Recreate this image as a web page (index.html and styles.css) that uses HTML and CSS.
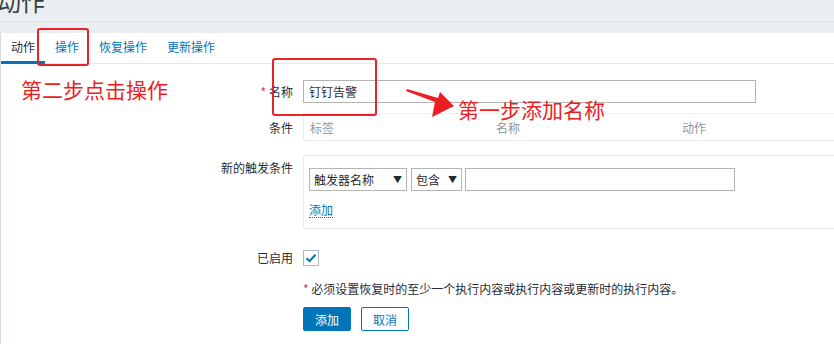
FILE: index.html
```html
<!doctype html>
<html>
<head>
    <meta charset="utf-8">
    <title>动作</title>
    <link rel="stylesheet" href="styles.css">
</head>
<body>

    <div class="header">
        <h1>动作</h1>
    </div>

    <div class="panel">
        <ul class="tabs">
            <li class="active">动作</li>
            <li><a href="#">操作</a></li>
            <li><a href="#">恢复操作</a></li>
            <li><a href="#">更新操作</a></li>
        </ul>

        <div class="form">
            <div class="row row-name">
                <label class="required">名称</label>
                <div class="field"><input type="text" class="text-wide" value="钉钉告警"></div>
            </div>
            <div class="row row-cond">
                <label>条件</label>
                <div class="field">
                    <div class="box cond-box">
                        <span class="col">标签</span>
                        <span class="col">名称</span>
                        <span class="col">动作</span>
                    </div>
                </div>
            </div>
            <div class="row row-trigger">
                <label>新的触发条件</label>
                <div class="field">
                    <div class="box trigger-box">
                        <div class="controls">
                            <div class="select select-type">触发器名称<span class="caret">▼</span></div>
                            <div class="select select-op">包含<span class="caret">▼</span></div>
                            <input type="text" class="text-value">
                        </div>
                        <a href="#" class="link-add">添加</a>
                    </div>
                </div>
            </div>
            <div class="row row-enabled">
                <label>已启用</label>
                <div class="field">
                    <span class="checkbox">
                        <svg width="12" height="10" viewBox="0 0 12 10"><path d="M1.5 5.2 L4.6 8 L10.5 1.8" fill="none" stroke="#0275b8" stroke-width="2"/></svg>
                    </span>
                </div>
            </div>
            <div class="row row-hint">
                <label></label>
                <div class="field hint"><span class="star">*</span> 必须设置恢复时的至少一个执行内容或执行内容或更新时的执行内容。</div>
            </div>
            <div class="row row-buttons">
                <label></label>
                <div class="field buttons">
                    <button class="btn-primary">添加</button>
                    <button class="btn-alt">取消</button>
                </div>
            </div>
        </div>

        <!-- annotations drawn over the screenshot -->
        <div class="mark mark-tab"></div>
        <div class="mark mark-name"></div>
        <div class="note note-two">第二步点击操作</div>
        <div class="note note-one">第一步添加名称</div>
        <svg class="arrow" width="60" height="40" viewBox="0 0 60 40">
            <path d="M2 5 L3 3 L34 12 L36 6 L50 20 L28 31 L31 16 Z" fill="#ee1d24"/>
        </svg>
    </div>

</body>
</html>
```

FILE: styles.css
```css
body {
    margin: 0;
    background-color: #ebeef0;
    font-family: "Noto Sans CJK SC", "Noto Sans", sans-serif;
    font-size: 12px;
    color: #1f2c33;
    overflow: hidden;
}
.header {
    height: 21px;
    border-bottom: 1px solid #dde2e5;
    background-color: #eceff1;
    overflow: hidden;
    margin-bottom: 11px;
}
.header h1 {
    margin: -14px 0 0 -3px;
    font-size: 24px;
    font-weight: normal;
    line-height: 30px;
    color: #383f44;
}
.panel {
    position: relative;
    background-color: #fff;
    border-left: 1px solid #d6dbde;
    height: 320px;
}
.tabs {
    display: flex;
    margin: 0;
    padding: 0;
    list-style: none;
    height: 30px;
    border-bottom: 1px solid #e6eaec;
}
.tabs li {
    padding: 0 10px;
    line-height: 28px;
    border-bottom: 3px solid transparent;
    margin-bottom: -1px;
}
.tabs li.active {
    border-bottom-color: #0275b8;
}
.tabs a {
    color: #0275b8;
    text-decoration: none;
}
.form {
    padding-top: 16px;
}
.row {
    display: flex;
}
.row label {
    width: 302px;
    flex-shrink: 0;
    text-align: right;
    padding-right: 10px;
    box-sizing: border-box;
    color: #1f2c33;
}
.row .field {
    flex: 1;
}
.required::before {
    content: "*";
    color: #e33734;
    margin-right: 3px;
}
.row-name {
    align-items: center;
    height: 23px;
}
.row-cond {
    margin-top: 10px;
    align-items: center;
}
.row-trigger {
    margin-top: 14px;
}
.row-trigger label {
    padding-top: 4px;
}
.row-enabled {
    margin-top: 20px;
    align-items: center;
}
.row-hint {
    margin-top: 15px;
}
.row-buttons {
    margin-top: 10px;
}
input[type="text"] {
    font-family: inherit;
    font-size: 12px;
    color: #1f2c33;
    height: 23px;
    box-sizing: border-box;
    border: 1px solid #b4b4b4;
    padding: 0 5px;
    margin: 0;
    outline: none;
}
.text-wide {
    width: 453px;
}
.box {
    width: 620px;
    border: 1px solid #ebeef0;
    box-sizing: border-box;
}
.cond-box {
    display: flex;
    height: 28px;
    align-items: center;
    padding-left: 6px;
}
.cond-box .col {
    width: 186px;
    color: #8b979e;
}
.trigger-box {
    height: 74px;
    padding: 12px 5px 0;
}
.controls {
    display: flex;
    gap: 3px;
}
.select {
    height: 23px;
    box-sizing: border-box;
    border: 1px solid #b4b4b4;
    padding: 0 4px;
    line-height: 21px;
    display: flex;
    justify-content: space-between;
}
.caret {
    font-size: 9px;
    color: #1f2c33;
}
.select-type {
    width: 98px;
    margin-right: 1px;
}
.select-op {
    width: 51px;
}
.text-value {
    width: 270px;
}
.link-add {
    display: inline-block;
    margin-top: 11px;
    color: #0275b8;
    text-decoration: none;
    border-bottom: 1px dotted #0275b8;
    line-height: 15px;
}
.checkbox {
    display: flex;
    align-items: center;
    justify-content: center;
    width: 16px;
    height: 16px;
    box-sizing: border-box;
    border: 1px solid #acbbc2;
}
.hint {
    color: #1f2c33;
    line-height: 16px;
}
.hint .star {
    color: #e33734;
}
.buttons {
    display: flex;
    gap: 10px;
}
.buttons button {
    font-family: inherit;
    font-size: 12px;
    width: 48px;
    height: 24px;
    border-radius: 2px;
    cursor: pointer;
}
.btn-primary {
    background-color: #0275b8;
    border: 1px solid #0275b8;
    color: #fff;
}
.btn-alt {
    background-color: #fff;
    border: 1px solid #0275b8;
    color: #0275b8;
}

/* red annotations */
.mark {
    position: absolute;
    border: 2px solid #e8232a;
    border-radius: 3px;
}
.mark-tab {
    left: 36px;
    top: -5px;
    width: 48px;
    height: 34px;
}
.mark-name {
    left: 271px;
    top: 25px;
    width: 101px;
    height: 54px;
}
.note {
    position: absolute;
    color: #ee1d24;
    font-size: 21px;
    line-height: 24px;
    white-space: nowrap;
}
.note-two {
    left: 20px;
    top: 44px;
}
.note-one {
    left: 457px;
    top: 64px;
}
.arrow {
    position: absolute;
    left: 403px;
    top: 53px;
}
```
